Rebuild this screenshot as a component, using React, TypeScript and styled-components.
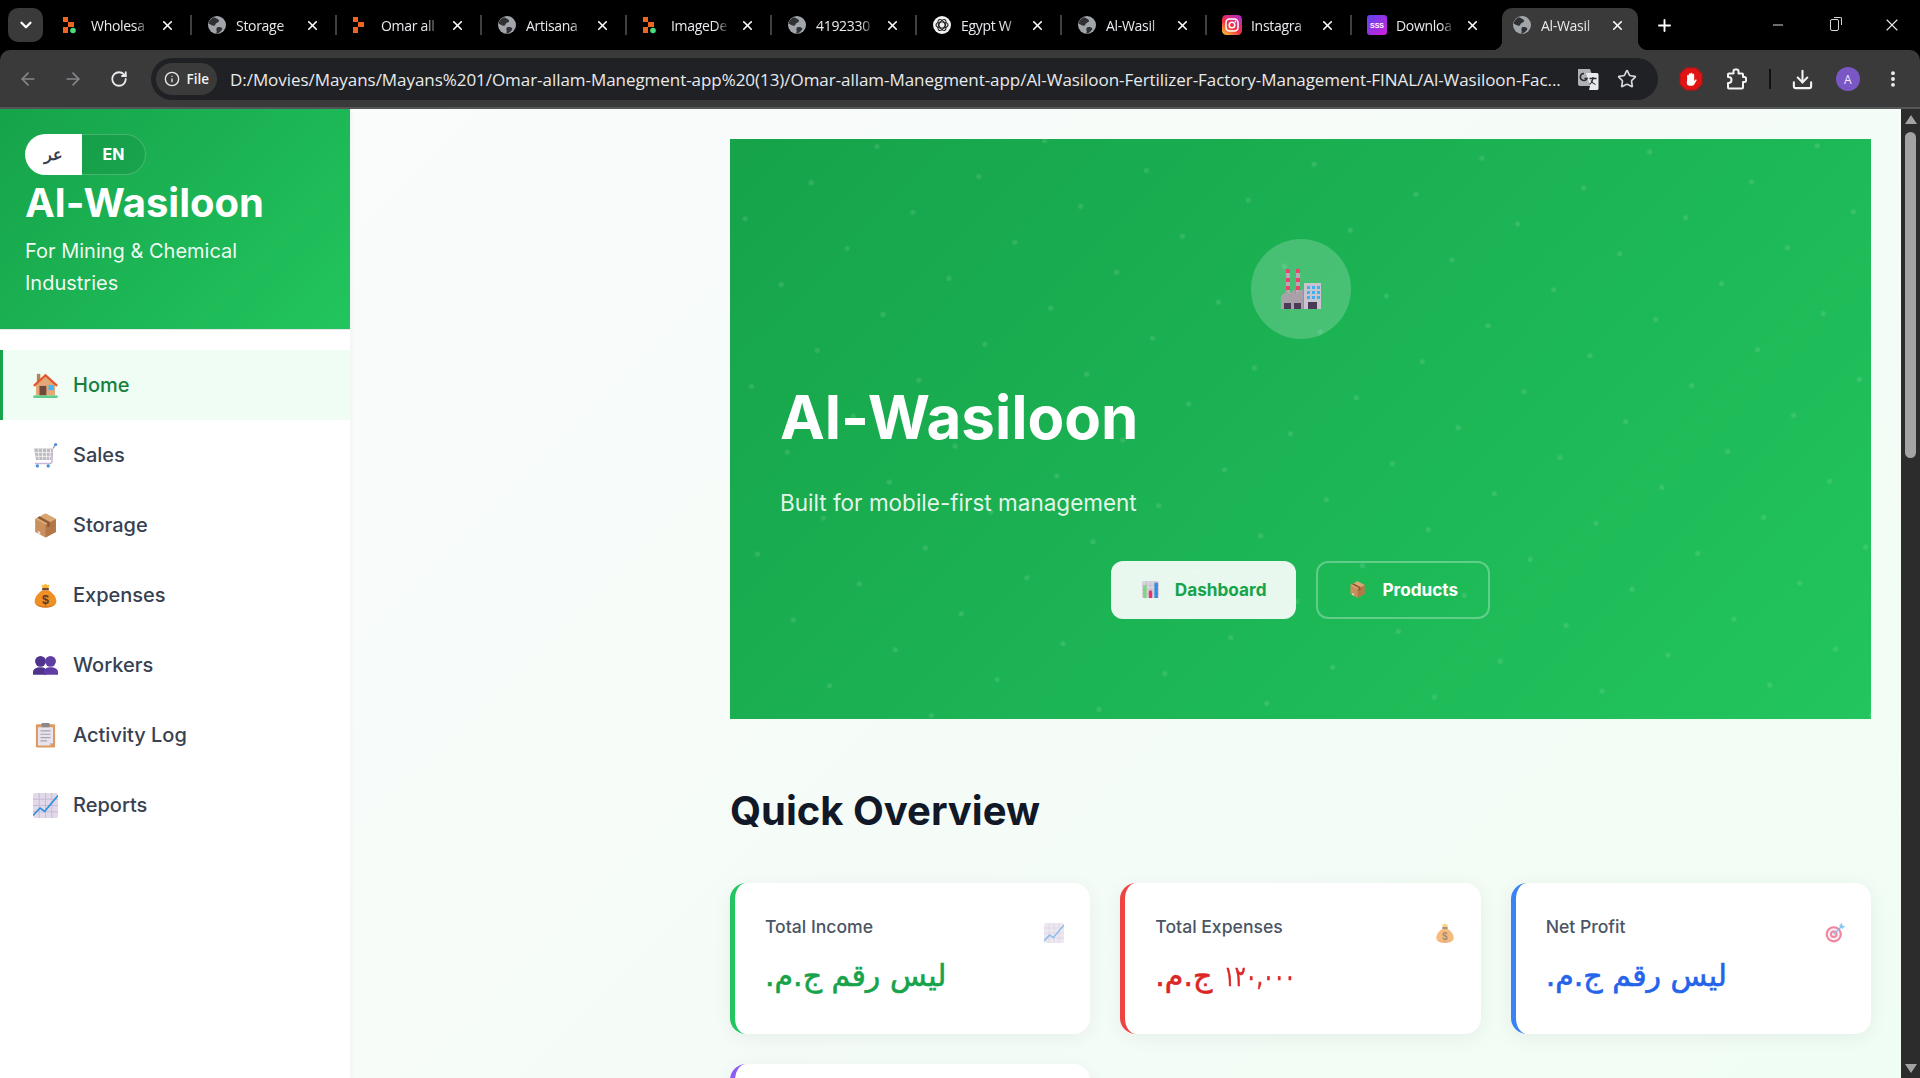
import React from 'react';
import styled, { createGlobalStyle } from 'styled-components';
import {
  ArrowLeft,
  ArrowRight,
  ChevronDown,
  Download,
  EllipsisVertical,
  Info,
  Minus,
  Plus,
  RotateCw,
  Star,
  X,
} from 'lucide-react';

const GlobalStyle = createGlobalStyle`
  html, body {
    margin: 0;
    padding: 0;
    height: 100%;
    overflow: hidden;
    background: #000;
  }
  * {
    box-sizing: border-box;
  }
`;

type IconProps = { size: number };

const HouseIcon = ({ size }: IconProps) => (
  <svg width={size} height={size} viewBox="2 2 28 29" aria-hidden="true">
    <rect x="6" y="3" width="4" height="10" fill="#b5835a" />
    <path d="M5 15 16 5l11 10v13H5z" fill="#e3a877" />
    <path d="M2.500 17 16 4.500 29.500 17" fill="none" stroke="#e4572e" strokeWidth="2.600" />
    <rect x="9" y="17" width="8" height="11" fill="#70493c" />
    <rect x="19.500" y="16" width="6" height="6" fill="#45b4f0" />
    <rect x="2" y="28" width="28" height="3" fill="#5fce8a" />
  </svg>
);

const CartIcon = ({ size }: IconProps) => (
  <svg width={size} height={size} viewBox="1.500 0.500 28.500 30" aria-hidden="true">
    <path d="M2 7h23l-2.500 14H4.500z" fill="#bdbbc0" />
    <path
      d="M7 7.500l1 13M12 7.500l.5 13M17 7.500l-.3 13M22 7.500l-1.500 13M3 12h21M3.600 16.500h19.600"
      stroke="#f1f0f2"
      strokeWidth="1.100"
      fill="none"
    />
    <path d="M25 7 27.500 2.500" stroke="#a7a5ab" strokeWidth="1.800" fill="none" />
    <circle cx="28" cy="2.400" r="1.800" fill="#3f8fdc" />
    <path d="M24 10l-.4 12c0 2-1 3-3 3H3" stroke="#c9b8da" strokeWidth="1.800" fill="none" />
    <circle cx="6" cy="28" r="2" fill="#3f8fdc" />
    <circle cx="19" cy="28" r="2" fill="#3f8fdc" />
  </svg>
);

const BoxIcon = ({ size }: IconProps) => (
  <svg width={size} height={size} viewBox="2.500 1.500 27 29" aria-hidden="true">
    <path d="M16 2 28 8.500v15L16 30 4 23.500v-15z" fill="#c98f5d" />
    <path d="M16 15 28 8.500v15L16 30z" fill="#b27847" />
    <path d="M16 2 28 8.500 16 15 4 8.500z" fill="#dba670" />
    <path d="m9 5.300 12 6.500v5l-3 1.500v-5L6.500 7z" fill="#8c5a37" />
    <path d="m7 22 3 1.600v3L7 25z" fill="#eadfe0" />
  </svg>
);

const MoneyBagIcon = ({ size }: IconProps) => (
  <svg width={size} height={size} viewBox="1.500 1 29 30" aria-hidden="true">
    <path d="M11 2.500 13.500 4 16 1.500 18.500 4 21 2.500 19.500 7h-7z" fill="#f9b633" />
    <rect x="12" y="7" width="8" height="3" fill="#6d4a3a" />
    <path d="M12 10h8c5 3 9 8 9 13 0 5-5 7.500-13 7.500S3 28 3 23c0-5 4-10 9-13z" fill="#f08f24" />
    <path d="M16 29c6 0 11-1 12.500-5-1 3.500-6 6.500-12.500 6.500S4.500 28 3.500 24C5 28 10 29 16 29z" fill="#d86f1a" />
    <text x="16" y="26" textAnchor="middle" fontFamily="Liberation Sans, sans-serif" fontSize="15" fontWeight="700" fill="#5f3a2a">
      $
    </text>
  </svg>
);

const BustsIcon = ({ size }: IconProps) => (
  <svg width={size} height={size} viewBox="1 1 30 30" aria-hidden="true">
    <circle cx="10" cy="11" r="6.500" fill="#50338c" />
    <path d="M1 27v-3c0-4 4-6 9-6s7 2 7 6v3z" fill="#50338c" />
    <circle cx="22" cy="11" r="6.500" fill="#5f3da3" />
    <path d="M14 27v-3c0-4 3-6 8-6s9 2 9 6v3z" fill="#5f3da3" />
  </svg>
);

const ClipboardIcon = ({ size }: IconProps) => (
  <svg width={size} height={size} viewBox="1 1 30 30" aria-hidden="true">
    <rect x="4.500" y="2.500" width="23" height="28" rx="1.500" fill="#de9a5e" />
    <path d="M7 6h18v19l-4 3H7z" fill="#e8e3ee" />
    <path d="m25 25-4 3v-3z" fill="#c7b8d0" />
    <rect x="11" y="1" width="10" height="5" rx="1.500" fill="#8b8790" />
    <path d="M10 10.500h12M10 14.500h12M10 18.500h12M10 22.500h8" stroke="#a8a3b0" strokeWidth="1.400" />
  </svg>
);

const ChartIcon = ({ size }: IconProps) => (
  <svg width={size} height={size} viewBox="1 1 30 30" aria-hidden="true">
    <rect x="1" y="1" width="30" height="30" rx="3" fill="#e1d8e8" />
    <path d="M8.500 1v30M16 1v30M23.500 1v30M1 8.500h30M1 16h30M1 23.500h30" stroke="#c4b6d2" strokeWidth="1" />
    <path d="M1 28 9.500 19l5.500 4L31 4" fill="none" stroke="#2f8fe0" strokeWidth="2" />
  </svg>
);

const BarsIcon = ({ size }: IconProps) => (
  <svg width={size} height={size} viewBox="1 1 30 30" aria-hidden="true">
    <rect x="1" y="1" width="30" height="30" rx="2" fill="#d9d5de" />
    <path d="M8.500 1v30M16 1v30M23.500 1v30M1 8.500h30M1 16h30M1 23.500h30" stroke="#bab4c2" strokeWidth="1" />
    <rect x="3" y="9" width="6" height="22" fill="#7ed87f" />
    <rect x="13" y="18" width="6" height="13" fill="#e9336e" />
    <rect x="23" y="4" width="6" height="27" fill="#2f8fe0" />
  </svg>
);

const FactoryIcon = ({ size }: IconProps) => (
  <svg width={size} height={size} viewBox="0 0 40 40" aria-hidden="true">
    <rect x="5" y="0" width="4" height="25" fill="#b8acb4" />
    <rect x="15" y="0" width="4" height="25" fill="#b8acb4" />
    <path d="M5 0h4v4H5zM5 9h4v4H5zM5 17h4v4H5zM15 0h4v4h-4zM15 9h4v4h-4zM15 17h4v4h-4z" fill="#ee4170" />
    <path d="M0 27 7 21v5l7-6v5l8-5v20H0z" fill="#a9a0aa" />
    <rect x="23" y="14" width="17" height="26" fill="#c9c4cd" />
    <path d="M26 17h3v3h-3zM31 17h3v3h-3zM36 17h3v3h-3zM26 22h3v3h-3zM31 22h3v3h-3zM36 22h3v3h-3zM26 27h3v3h-3zM31 27h3v3h-3zM36 27h3v3h-3z" fill="#40b0f5" />
    <path d="M3 34h7v6H3zM13 34h7v6h-7zM27 33h9v7h-9z" fill="#4a3a55" />
  </svg>
);

const TargetIcon = ({ size }: IconProps) => (
  <svg width={size} height={size} viewBox="0 0 32 32" aria-hidden="true">
    <circle cx="14" cy="18" r="13" fill="#e8355f" />
    <circle cx="14" cy="18" r="9.500" fill="#f3e6ee" />
    <circle cx="14" cy="18" r="6" fill="#e8355f" />
    <circle cx="14" cy="18" r="2.800" fill="#f3e6ee" />
    <path d="M14 18 26 6" stroke="#3f8fdc" strokeWidth="2" />
    <path d="M23 4 27 0l1 4 4 1-4 4-4-1z" fill="#3fa3ec" />
  </svg>
);

const GlobeFavicon = () => (
  <svg width="18" height="18" viewBox="0 0 18 18" aria-hidden="true">
    <circle cx="9" cy="9" r="9" fill="#a1a5aa" />
    <path
      d="M6 1.200C8 2.500 10.500 3 11 4.500c.4 1.400-1.200 1.700-2.400 2.400C7 7.800 7.500 9.500 6 9.800 4.300 10 2.800 8.500.5 7.500 1.200 4.500 3.300 2.200 6 1.200zM10 11c1.800-.4 3.600.2 4.200 1.300.5 1.100-1 2.600-2.200 3.800-1.200 1-2.600 1.600-4 1.800.6-1.400 1-2.300.5-3.700-.4-1.200.1-2.900 1.500-3.200z"
      fill="#2f3033"
    />
  </svg>
);

const BoltFavicon = ({ dot }: { dot?: boolean }) => (
  <svg width="18" height="18" viewBox="0 0 18 18" aria-hidden="true">
    <path d="M0 1h5v5H0zM5 6h6v5H5zM0 11h5v6H0z" fill="#f0651f" />
    {dot && <circle cx="10" cy="14.500" r="2.800" fill="#4ade80" />}
  </svg>
);

const OpenAiFavicon = () => (
  <svg width="18" height="18" viewBox="0 0 18 18" aria-hidden="true">
    <circle cx="9" cy="9" r="9" fill="#f1f1f1" />
    <g fill="none" stroke="#222" strokeWidth="1.200">
      <ellipse cx="9" cy="9" rx="6" ry="3" />
      <ellipse cx="9" cy="9" rx="6" ry="3" transform="rotate(60 9 9)" />
      <ellipse cx="9" cy="9" rx="6" ry="3" transform="rotate(120 9 9)" />
    </g>
  </svg>
);

const InstagramFavicon = () => (
  <svg width="20" height="20" viewBox="0 0 20 20" aria-hidden="true">
    <defs>
      <linearGradient id="igGrad" x1="0.1" y1="1" x2="0.8" y2="0">
        <stop offset="0" stopColor="#fdc03a" />
        <stop offset="0.45" stopColor="#f0323f" />
        <stop offset="1" stopColor="#b82ac8" />
      </linearGradient>
    </defs>
    <rect width="20" height="20" rx="4.500" fill="url(#igGrad)" />
    <rect x="4" y="4" width="12" height="12" rx="3.500" fill="none" stroke="#fff" strokeWidth="1.500" />
    <circle cx="10" cy="10" r="2.800" fill="none" stroke="#fff" strokeWidth="1.500" />
    <circle cx="13.500" cy="6.500" r="0.900" fill="#fff" />
  </svg>
);

const SssFavicon = styled.span`
  width: 20px;
  height: 20px;
  border-radius: 3px;
  display: flex;
  align-items: center;
  justify-content: center;
  color: #fff;
  font-family: 'Liberation Sans', sans-serif;
  font-size: 7px;
  font-weight: 700;
  background: linear-gradient(135deg, #5b45f0, #d21fd8);
`;

const TranslateIcon = () => (
  <svg width="22" height="24" viewBox="0 0 22 24" aria-hidden="true">
    <path d="M1 2h12l6 17H3a2 2 0 0 1-2-2z" fill="#aeb1b5" />
    <path d="M9 6h11a1.500 1.500 0 0 1 1.500 1.500v14A1.500 1.500 0 0 1 20 23h-8l1-4z" fill="#e8eaed" />
    <path d="M7 6.500a3.500 3.500 0 1 0 3 5H7.500" fill="none" stroke="#2a2b2d" strokeWidth="1.500" />
    <path d="M12.500 11.500h7M16 10v1.500c-.4 2.800-2 5-3.500 6M14 13.500c1 1.900 2.500 3.300 4.500 4" fill="none" stroke="#2a2b2d" strokeWidth="1.300" />
  </svg>
);

const StopHandIcon = () => (
  <svg width="24" height="24" viewBox="0 0 22 22" aria-hidden="true">
    <path d="M6.500 1h9L21 6.500v9L15.500 21h-9L1 15.500v-9z" fill="#e01414" stroke="#c80f0f" />
    <path
      d="M7.500 11V8a.8.8 0 0 1 1.600 0v2.500-4a.8.8 0 0 1 1.600 0v4-4.500a.8.8 0 0 1 1.600 0v4.500-3.500a.8.8 0 0 1 1.600 0v6l1-1.300c.7-.7 1.600 0 1.100.8l-2.100 3.600c-.5.700-1.100 1.100-2.100 1.100h-1.900c-1.700 0-2.800-1.100-2.800-2.700z"
      fill="#fff"
    />
  </svg>
);

// chrome's extension glyph, lucide's puzzle has a different outline
const ExtensionIcon = () => (
  <svg width="22" height="24" viewBox="0 0 22 24" fill="none" aria-hidden="true">
    <path
      d="M3 6.500h4.500V4a1.500 1.500 0 0 1 1.500-1.500h2A1.500 1.500 0 0 1 12.500 4v2.500H16a1 1 0 0 1 1 1V10h1.500a1.500 1.500 0 0 1 1.500 1.500v2a1.500 1.500 0 0 1-1.500 1.500H17v5.500a1 1 0 0 1-1 1H3a1 1 0 0 1-1-1V16h.5a2 2 0 0 0 0-6H2V7.500a1 1 0 0 1 1-1z"
      stroke="#f1f3f4"
      strokeWidth="2"
      strokeLinejoin="round"
    />
  </svg>
);

const tabs = [
  { title: 'Wholesa', icon: <BoltFavicon dot /> },
  { title: 'Storage', icon: <GlobeFavicon /> },
  { title: 'Omar all', icon: <BoltFavicon /> },
  { title: 'Artisana', icon: <GlobeFavicon /> },
  { title: 'ImageDe', icon: <BoltFavicon dot /> },
  { title: '4192330', icon: <GlobeFavicon /> },
  { title: 'Egypt W', icon: <OpenAiFavicon /> },
  { title: 'Al-Wasil', icon: <GlobeFavicon /> },
  { title: 'Instagra', icon: <InstagramFavicon /> },
  { title: 'Downloa', icon: <SssFavicon>SSS</SssFavicon> },
  { title: 'Al-Wasil', icon: <GlobeFavicon />, active: true },
];

const navItems = [
  { label: 'Home', icon: <HouseIcon size={25} />, active: true },
  { label: 'Sales', icon: <CartIcon size={25} /> },
  { label: 'Storage', icon: <BoxIcon size={25} /> },
  { label: 'Expenses', icon: <MoneyBagIcon size={25} /> },
  { label: 'Workers', icon: <BustsIcon size={25} /> },
  { label: 'Activity Log', icon: <ClipboardIcon size={25} /> },
  { label: 'Reports', icon: <ChartIcon size={25} /> },
];

const stats = [
  { label: 'Total Income', value: 'ليس رقم ج.م.', accent: '#22c55e', color: '#16a34a', icon: <ChartIcon size={20} /> },
  { label: 'Total Expenses', amount: '١٢٠,٠٠٠', value: 'ج.م.', accent: '#ef4444', color: '#dc2626', icon: <MoneyBagIcon size={20} /> },
  { label: 'Net Profit', value: 'ليس رقم ج.م.', accent: '#3b82f6', color: '#2563eb', icon: <TargetIcon size={20} /> },
];

const URL_TEXT =
  'D:/Movies/Mayans/Mayans%201/Omar-allam-Manegment-app%20(13)/Omar-allam-Manegment-app/Al-Wasiloon-Fertilizer-Factory-Management-FINAL/Al-Wasiloon-Fac...';

export default function App() {
  return (
    <Window>
      <GlobalStyle />
      <TabStrip>
        <TabSearch>
          <ChevronDown size={18} strokeWidth={3} color="#fff" />
        </TabSearch>
        {tabs.map((tab, i) => (
          <Tab key={i} $active={tab.active} $divider={!tab.active && i < tabs.length - 2}>
            {tab.active && <Flare $side="left" />}
            {tab.active && <Flare $side="right" />}
            <Favicon>{tab.icon}</Favicon>
            <TabTitle>{tab.title}</TabTitle>
            <TabClose>
              <X size={15} strokeWidth={2.6} color="#fff" />
            </TabClose>
          </Tab>
        ))}
        <NewTab>
          <Plus size={19} strokeWidth={2.4} color="#fff" />
        </NewTab>
        <WindowControls>
          <WindowButton>
            <Minus size={16} strokeWidth={1.4} color="#e8eaed" />
          </WindowButton>
          <WindowButton>
            <RestoreGlyph />
          </WindowButton>
          <WindowButton>
            <X size={20} strokeWidth={1.3} color="#e8eaed" />
          </WindowButton>
        </WindowControls>
      </TabStrip>

      <Toolbar>
        <ToolButton>
          <ArrowLeft size={20} strokeWidth={2} color="#85878a" />
        </ToolButton>
        <ToolButton>
          <ArrowRight size={20} strokeWidth={2} color="#85878a" />
        </ToolButton>
        <ToolButton>
          <RotateCw size={18} strokeWidth={2.4} color="#e8eaed" />
        </ToolButton>
        <AddressBar>
          <FileChip>
            <Info size={16} strokeWidth={2} color="#e8eaed" />
            File
          </FileChip>
          <UrlText>{URL_TEXT}</UrlText>
          <AddressIcons>
            <TranslateIcon />
            <Star size={20} strokeWidth={2} color="#d5d7da" />
          </AddressIcons>
        </AddressBar>
        <ToolActions>
          <ToolButton>
            <StopHandIcon />
          </ToolButton>
          <ToolButton>
            <ExtensionIcon />
          </ToolButton>
          <ToolDivider />
          <ToolButton>
            <Download size={23} strokeWidth={2.2} color="#f1f3f4" />
          </ToolButton>
          <ToolButton>
            <Avatar>A</Avatar>
          </ToolButton>
          <ToolButton>
            <EllipsisVertical size={20} strokeWidth={2.6} color="#f1f3f4" />
          </ToolButton>
        </ToolActions>
      </Toolbar>

      <Viewport>
        <Sidebar>
          <SidebarHeader>
            <LangToggle>
              <LangOption $active>عر</LangOption>
              <LangOption>EN</LangOption>
            </LangToggle>
            <BrandTitle>Al-Wasiloon</BrandTitle>
            <BrandSubtitle>For Mining &amp; Chemical Industries</BrandSubtitle>
          </SidebarHeader>
          <Nav>
            {navItems.map((item) => (
              <NavItem key={item.label} $active={item.active}>
                {item.icon}
                {item.label}
              </NavItem>
            ))}
          </Nav>
        </Sidebar>

        <Main>
          <Hero>
            <HeroDots aria-hidden="true">
              <defs>
                <pattern
                  id="heroDots"
                  width="75.05"
                  height="75.05"
                  patternUnits="userSpaceOnUse"
                  patternTransform="translate(30 28.7) rotate(-28.66)"
                >
                  <circle cx="37.6" cy="37.6" r="2.6" fill="#fff" fillOpacity="0.11" />
                </pattern>
              </defs>
              <rect width="100%" height="100%" fill="url(#heroDots)" />
            </HeroDots>
            <HeroBadge>
              <FactoryIcon size={40} />
            </HeroBadge>
            <HeroTitle>Al-Wasiloon</HeroTitle>
            <HeroSubtitle>Built for mobile-first management</HeroSubtitle>
            <HeroActions>
              <HeroButton $primary>
                <BarsIcon size={17} />
                Dashboard
              </HeroButton>
              <HeroButton>
                <BoxIcon size={17} />
                Products
              </HeroButton>
            </HeroActions>
          </Hero>

          <SectionTitle>Quick Overview</SectionTitle>
          <StatGrid>
            {stats.map((stat) => (
              <StatCard key={stat.label} $accent={stat.accent}>
                <StatHead>
                  <StatLabel>{stat.label}</StatLabel>
                  <StatIcon>{stat.icon}</StatIcon>
                </StatHead>
                <StatValue $color={stat.color}>
                  {stat.amount && <StatAmount>{stat.amount}</StatAmount>}
                  {stat.value}
                </StatValue>
              </StatCard>
            ))}
            <StatCard $accent="#8b5cf6" />
          </StatGrid>
        </Main>

        <Scrollbar>
          <ScrollArrow $up />
          <ScrollThumb />
          <ScrollTrack />
          <ScrollArrow />
        </Scrollbar>
      </Viewport>
    </Window>
  );
}

const Window = styled.div`
  width: 1920px;
  height: 1078px;
  display: flex;
  flex-direction: column;
  overflow: hidden;
  background: #000;
  font-family: Inter, 'Liberation Sans', sans-serif;
`;

const TabStrip = styled.div`
  height: 50px;
  flex: none;
  display: flex;
  align-items: stretch;
  padding-left: 8px;
  background: #000;
`;

const TabSearch = styled.div`
  width: 35px;
  height: 34px;
  margin: 8px 4px 0 0;
  display: flex;
  align-items: center;
  justify-content: center;
  border-radius: 10px;
  background: #3a3a3a;
`;

const Tab = styled.div<{ $active?: boolean; $divider?: boolean }>`
  position: relative;
  width: 145px;
  flex: none;
  display: flex;
  align-items: center;
  padding-left: 15px;
  z-index: ${(p) => (p.$active ? 1 : 0)};

  &::before {
    content: '';
    position: absolute;
    inset: 8px 4px 0 5px;
    border-radius: 10px 10px 0 0;
    background: ${(p) => (p.$active ? '#3a3a3a' : 'transparent')};
  }

  &::after {
    content: '';
    position: absolute;
    right: 0;
    top: 15px;
    width: 2px;
    height: 20px;
    background: ${(p) => (p.$divider ? '#3f4043' : 'transparent')};
  }
`;

const Flare = styled.span<{ $side: 'left' | 'right' }>`
  position: absolute;
  bottom: 0;
  width: 10px;
  height: 10px;
  ${(p) => (p.$side === 'left' ? 'left: -5px;' : 'right: -6px;')}
  background: radial-gradient(
    circle at ${(p) => (p.$side === 'left' ? '0 0' : '100% 0')},
    transparent 10px,
    #3a3a3a 10.5px
  );
`;

const Favicon = styled.span`
  position: relative;
  width: 20px;
  height: 20px;
  flex: none;
  display: flex;
  align-items: center;
  justify-content: center;
`;

const TabTitle = styled.span`
  position: relative;
  width: 64px;
  margin-left: 9px;
  overflow: hidden;
  white-space: nowrap;
  color: #e8eaed;
  font-family: 'Open Sans', sans-serif;
  font-size: 14px;
  letter-spacing: -0.3px;
  -webkit-mask-image: linear-gradient(90deg, #000 70%, transparent 92%);
  mask-image: linear-gradient(90deg, #000 70%, transparent 92%);
`;

const TabClose = styled.span`
  position: relative;
  margin-left: 5px;
  display: flex;
`;

const NewTab = styled.div`
  width: 44px;
  display: flex;
  align-items: center;
  justify-content: center;
`;

const WindowControls = styled.div`
  margin-left: auto;
  display: flex;
`;

const WindowButton = styled.div`
  width: 57px;
  display: flex;
  align-items: center;
  justify-content: center;
`;

const RestoreGlyph = styled.span`
  position: relative;
  width: 9px;
  height: 12px;
  border: 1.3px solid #d5d7da;
  border-radius: 2px;

  &::after {
    content: '';
    position: absolute;
    top: -3.5px;
    right: -3.5px;
    width: 7px;
    height: 7px;
    border-top: 1.3px solid #d5d7da;
    border-right: 1.3px solid #d5d7da;
    border-radius: 0 2px 0 0;
  }
`;

const Toolbar = styled.div`
  height: 59px;
  flex: none;
  display: flex;
  align-items: center;
  padding: 1px 4px 0 5px;
  border-radius: 10px 10px 0 0;
  background: #3a3a3a;
  border-bottom: 2px solid #555658;
`;

const ToolButton = styled.div`
  width: 45.5px;
  height: 40px;
  flex: none;
  display: flex;
  align-items: center;
  justify-content: center;
`;

const AddressBar = styled.div`
  width: 1507px;
  height: 42px;
  flex: none;
  margin-left: 9px;
  display: flex;
  align-items: center;
  padding: 0 21px 0 5px;
  border-radius: 21px;
  background: #202124;
`;

const FileChip = styled.div`
  height: 32px;
  padding: 0 8px;
  display: flex;
  align-items: center;
  gap: 7px;
  border-radius: 16px;
  background: #3a3a3a;
  color: #f1f3f4;
  font-family: 'Open Sans', sans-serif;
  font-size: 13.5px;
  font-weight: 600;
`;

const UrlText = styled.span`
  flex: 1;
  min-width: 0;
  margin-left: 13px;
  white-space: nowrap;
  overflow: hidden;
  color: #e8eaed;
  font-family: 'Open Sans', sans-serif;
  font-size: 17px;
  letter-spacing: -0.05px;
`;

const AddressIcons = styled.div`
  display: flex;
  align-items: center;
  gap: 18px;
`;

const ToolActions = styled.div`
  margin-left: 11px;
  display: flex;
  align-items: center;
`;

const ToolDivider = styled.span`
  width: 2px;
  height: 20px;
  margin: 0 9px;
  flex: none;
  background: #111;
`;

const Avatar = styled.span`
  width: 24px;
  height: 24px;
  display: flex;
  align-items: center;
  justify-content: center;
  border-radius: 50%;
  background: #7a57c4;
  color: #efe9fb;
  font-family: 'Open Sans', sans-serif;
  font-size: 12px;
`;

const Viewport = styled.div`
  flex: 1;
  min-height: 0;
  display: flex;
  background: #fff;
`;

const Sidebar = styled.aside`
  width: 350px;
  flex: none;
  background: #fff;
  box-shadow: 1px 0 6px rgba(0, 0, 0, 0.04);
  z-index: 1;
`;

const SidebarHeader = styled.div`
  height: 221px;
  padding: 25px 25px 0;
  background: linear-gradient(135deg, #16a34a, #22c55e);
  border-bottom: 1px solid #e5e7eb;
`;

const LangToggle = styled.div`
  width: 121px;
  height: 41px;
  display: flex;
  border: 1px solid rgba(255, 255, 255, 0.2);
  border-left: none;
  border-radius: 21px;
  background: rgba(0, 0, 0, 0.06);
`;

const LangOption = styled.span<{ $active?: boolean }>`
  flex: ${(p) => (p.$active ? '0 0 57px' : '1')};
  margin: ${(p) => (p.$active ? '-1px 0' : '0')};
  padding-bottom: 2px;
  display: flex;
  align-items: center;
  justify-content: center;
  border-radius: ${(p) => (p.$active ? '21px 0 0 21px' : '0')};
  background: ${(p) => (p.$active ? '#fff' : 'transparent')};
  color: ${(p) => (p.$active ? '#374151' : '#fff')};
  font-size: 16px;
  font-weight: 700;
`;

const BrandTitle = styled.h1`
  margin: 4px 0 0;
  color: #fff;
  font-size: 40px;
  line-height: 48px;
  font-weight: 700;
`;

const BrandSubtitle = styled.p`
  margin: 8px 0 0;
  color: rgba(255, 255, 255, 0.95);
  font-size: 20px;
  line-height: 32px;
  font-weight: 400;
`;

const Nav = styled.nav`
  padding-top: 20px;
`;

const NavItem = styled.a<{ $active?: boolean }>`
  height: 70px;
  display: flex;
  align-items: center;
  gap: 15px;
  padding-left: ${(p) => (p.$active ? '30px' : '33px')};
  border-left: ${(p) => (p.$active ? '3px solid #16a34a' : 'none')};
  background: ${(p) => (p.$active ? '#f0fdf4' : 'transparent')};
  color: ${(p) => (p.$active ? '#15803d' : '#374151')};
  font-size: 20px;
  font-weight: 500;
`;

const Main = styled.main`
  flex: 1;
  min-width: 0;
  overflow: hidden;
  padding: 30px 30px 0 380px;
  background: linear-gradient(135deg, #fafbfb 0%, #f0fdf4 100%);
`;

const Hero = styled.section`
  position: relative;
  height: 580px;
  padding: 100px 50px 0;
  background: linear-gradient(135deg, #16a34a, #22c55e);
`;

const HeroDots = styled.svg`
  position: absolute;
  inset: 0;
  width: 100%;
  height: 100%;
`;

const HeroBadge = styled.div`
  position: relative;
  width: 100px;
  height: 100px;
  margin: 0 auto;
  display: flex;
  align-items: center;
  justify-content: center;
  border-radius: 50%;
  background: rgba(255, 255, 255, 0.2);
`;

const HeroTitle = styled.h2`
  position: relative;
  margin: 42px 0 0;
  color: #fff;
  font-size: 60px;
  line-height: 72px;
  font-weight: 700;
`;

const HeroSubtitle = styled.p`
  position: relative;
  margin: 33px 0 0;
  color: rgba(255, 255, 255, 0.9);
  font-size: 22.5px;
  line-height: 34px;
`;

const HeroActions = styled.div`
  position: relative;
  margin-top: 41px;
  display: flex;
  justify-content: center;
  gap: 20px;
`;

const HeroButton = styled.a<{ $primary?: boolean }>`
  height: 58px;
  display: flex;
  align-items: center;
  gap: 16px;
  padding: 0 30px 2px 31px;
  border-radius: 12px;
  border: ${(p) => (p.$primary ? 'none' : '2px solid rgba(255, 255, 255, 0.3)')};
  background: ${(p) => (p.$primary ? 'rgba(255, 255, 255, 0.9)' : 'transparent')};
  color: ${(p) => (p.$primary ? '#16a34a' : '#fff')};
  font-size: 17.2px;
  font-weight: 700;
`;

const SectionTitle = styled.h2`
  margin: 68px 0 48px;
  color: #111827;
  font-size: 40px;
  line-height: 48px;
  font-weight: 700;
`;

const StatGrid = styled.div`
  display: grid;
  grid-template-columns: repeat(3, 1fr);
  gap: 30px;
`;

const StatCard = styled.article<{ $accent: string }>`
  min-height: 151px;
  padding: 30px 26px 0 30px;
  border-left: 5px solid ${(p) => p.$accent};
  border-radius: 16px;
  background: #fff;
  box-shadow: 0 4px 20px rgba(0, 0, 0, 0.06);
`;

const StatHead = styled.div`
  display: flex;
  justify-content: space-between;
  align-items: flex-start;
`;

const StatLabel = styled.span`
  color: #4b5563;
  font-size: 17.6px;
  line-height: 28px;
  font-weight: 500;
`;

const StatIcon = styled.span`
  margin-top: 10px;
  display: flex;
  opacity: 0.6;
`;

const StatValue = styled.div<{ $color: string }>`
  width: fit-content;
  margin-top: 12px;
  color: ${(p) => p.$color};
  font-family: 'DejaVu Sans', sans-serif;
  font-size: 30px;
  line-height: 42px;
  font-weight: 400;
  -webkit-text-stroke: 0.6px currentColor;
  direction: rtl;
  unicode-bidi: plaintext;
`;

// dejavu's arabic digits run much wider than the reference face
const StatAmount = styled.span`
  display: inline-block;
  margin-left: 12px;
  font-size: 28px;
  letter-spacing: -7.5px;
  transform: scaleX(0.72);
  transform-origin: left center;
`;

const Scrollbar = styled.div`
  width: 19px;
  flex: none;
  display: flex;
  flex-direction: column;
  align-items: center;
  padding: 6px 0 5px;
  background: #2c2c2c;
`;

const ScrollArrow = styled.span<{ $up?: boolean }>`
  width: 0;
  height: 0;
  flex: none;
  border-left: 6px solid transparent;
  border-right: 6px solid transparent;
  ${(p) => (p.$up ? 'border-bottom: 9px solid #a3a3a3;' : 'border-top: 9px solid #a3a3a3;')}
`;

const ScrollThumb = styled.span`
  width: 11px;
  height: 326px;
  margin-top: 8px;
  flex: none;
  border-radius: 6px;
  background: #a3a3a3;
`;

const ScrollTrack = styled.span`
  flex: 1;
`;
